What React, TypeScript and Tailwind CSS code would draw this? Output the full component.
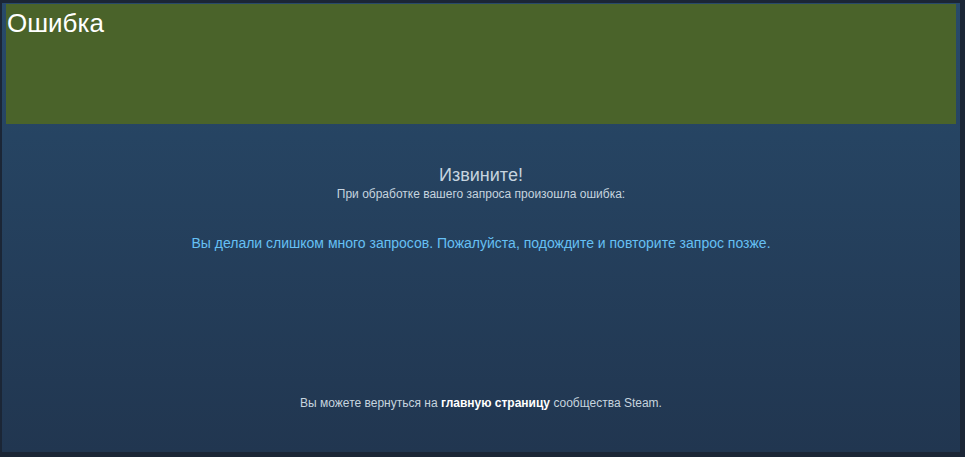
import React from "react";

const App = () => {
  return (
    <div className="h-[457px] w-[965px] bg-[#1b2636] pl-[2px] pr-[5px] pt-[3px] pb-[5px] font-['Liberation_Sans',Arial,sans-serif]">
      <div className="flex h-full flex-col bg-gradient-to-b from-[#284a6a] to-[#213650] px-[4px] pt-[1px]">
        <div className="h-[120px] bg-[#4a632a] pl-[1px] pt-[6px]">
          <h1 className="text-[26px] leading-none text-white">Ошибка</h1>
        </div>
        <div className="flex flex-1 flex-col items-center pt-[40px] text-center">
          <h2 className="text-[18px] leading-[22px] text-[#c6d4df]">Извините!</h2>
          <p className="text-[12px] leading-[16px] text-[#c6d4df]">При обработке вашего запроса произошла ошибка:</p>
          <p className="mt-[32px] text-[14px] leading-[18px] text-[#66c0f4]">
            Вы делали слишком много запросов. Пожалуйста, подождите и повторите запрос позже.
          </p>
          <p className="mt-auto mb-[41px] text-[12px] leading-[16px] text-[#c6d4df]">
            Вы можете вернуться на <span className="font-bold text-white">главную страницу</span> сообщества Steam.
          </p>
        </div>
      </div>
    </div>
  );
};

export default App;
